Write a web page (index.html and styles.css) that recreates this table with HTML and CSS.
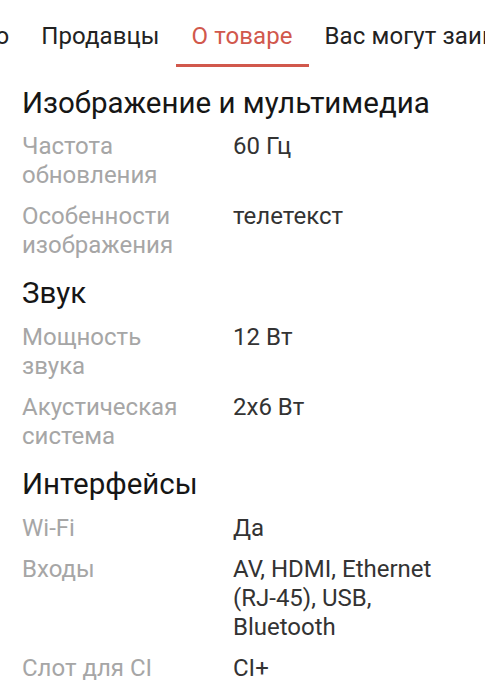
FILE: index.html
```html
<!DOCTYPE html>
<html lang="ru">
<head>
<meta charset="utf-8">
<title>О товаре</title>
<link rel="stylesheet" href="styles.css">
</head>
<body>
<nav class="tabs">
  <div class="tab">Видео</div>
  <div class="tab">Продавцы</div>
  <div class="tab tab-active">О товаре</div>
  <div class="tab">Вас могут заинтересовать</div>
</nav>
<main class="specs">
  <section class="group">
    <h2 class="group-title">Изображение и мультимедиа</h2>
    <dl class="rows">
      <div class="row"><dt class="label">Частота обновления</dt><dd class="value">60 Гц</dd></div>
      <div class="row"><dt class="label">Особенности изображения</dt><dd class="value">телетекст</dd></div>
    </dl>
  </section>
  <section class="group">
    <h2 class="group-title">Звук</h2>
    <dl class="rows">
      <div class="row"><dt class="label">Мощность звука</dt><dd class="value">12 Вт</dd></div>
      <div class="row"><dt class="label">Акустическая система</dt><dd class="value">2x6 Вт</dd></div>
    </dl>
  </section>
  <section class="group">
    <h2 class="group-title">Интерфейсы</h2>
    <dl class="rows">
      <div class="row"><dt class="label">Wi-Fi</dt><dd class="value">Да</dd></div>
      <div class="row"><dt class="label">Входы</dt><dd class="value">AV, HDMI, Ethernet (RJ-45), USB, Bluetooth</dd></div>
      <div class="row"><dt class="label">Слот для CI</dt><dd class="value">CI+</dd></div>
    </dl>
  </section>
</main>
</body>
</html>
```
FILE: styles.css
```css
html, body {
  margin: 0;
  padding: 0;
  background: #ffffff;
}
body {
  font-family: Roboto, "Noto Sans", sans-serif;
  color: #1a1a1a;
  overflow: hidden;
}
.tabs {
  display: flex;
  white-space: nowrap;
  margin-left: -77px;
}
.tab {
  flex: none;
  font-size: 24px;
  line-height: 28px;
  letter-spacing: 0.1px;
  padding: 22px 16px 14px;
  border-bottom: 3px solid transparent;
  color: #222222;
}
.tab-active {
  color: #d1584c;
  border-bottom-color: #d1584c;
}
.specs {
  padding: 0 22px;
}
.group {
  margin-top: 16px;
}
.group:first-child {
  margin-top: 18.6px;
}
.group-title {
  margin: 0 0 12.7px;
  font-size: 29.5px;
  line-height: 34px;
  font-weight: 400;
  color: #161616;
}
.rows {
  margin: 0;
  display: flex;
  flex-direction: column;
  gap: 12px;
}
.row {
  display: grid;
  grid-template-columns: 211px 1fr;
  font-size: 24px;
  line-height: 29px;
}
.label {
  margin: 0;
  padding-right: 35px;
  color: #a6a6a6;
}
.value {
  margin: 0;
  color: #333333;
}
```
